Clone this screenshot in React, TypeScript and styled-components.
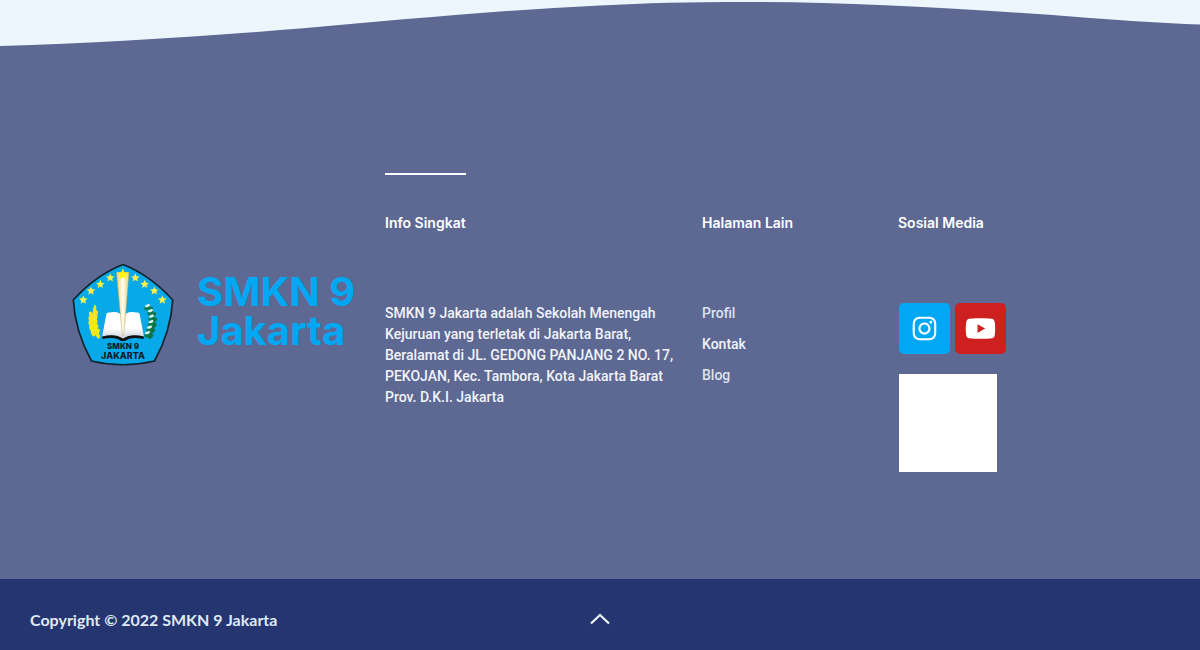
import React from "react";
import styled, { createGlobalStyle } from "styled-components";
import { FaInstagram, FaYoutube } from "react-icons/fa";

const GlobalStyle = createGlobalStyle`
  *, *::before, *::after { box-sizing: border-box; }
  body {
    margin: 0;
    background: #5d6893;
    font-family: Roboto, "Liberation Sans", sans-serif;
  }
`;

const Footer = styled.footer`
  display: flex;
  flex-direction: column;
  min-height: 100vh;
  background: #5d6893;
`;

const Wave = styled.svg`
  display: block;
  width: 100%;
  height: 50px;
`;

const Content = styled.div`
  flex: 1;
  display: grid;
  grid-template-columns: 313fr 317fr 196fr 302fr;
  padding-left: 6%;
`;

const Brand = styled.a`
  display: flex;
  align-items: center;
  gap: 23px;
  color: #00a8f3;
  text-decoration: none;
`;

const Emblem = styled.svg`
  flex: none;
  width: 102px;
  height: 104px;
`;

const BrandName = styled.span`
  padding-bottom: 8px;
  font-family: Inter, sans-serif;
  font-size: 40px;
  font-weight: 700;
  line-height: 39px;
`;

const BrandLine = styled.span`
  display: block;
`;

const Column = styled.section`
  padding-top: 123px;
  padding-bottom: 106px;
`;

const Lead = styled.div`
  height: 40px;
`;

const Rule = styled.hr`
  width: 81px;
  height: 2px;
  margin: 0;
  border: 0;
  background: #fff;
`;

const Heading = styled.h2`
  margin: 0 0 70px;
  color: #fff;
  font-family: Inter, sans-serif;
  font-size: 14px;
  font-weight: 600;
  line-height: 20px;
`;

const About = styled.p`
  margin: 0;
  color: #f1f4fa;
  font-size: 14px;
  font-weight: 500;
  line-height: 21px;
  white-space: nowrap;
`;

const Links = styled.ul`
  display: grid;
  gap: 10px;
  margin: 0;
  padding: 0;
  list-style: none;
`;

const PageLink = styled.a<{ $active?: boolean }>`
  display: block;
  color: ${(p) => (p.$active ? "#edf5fd" : "#dbe4f2")};
  font-size: 14px;
  font-weight: 500;
  line-height: 21px;
  text-decoration: none;
`;

const SocialRow = styled.div`
  display: flex;
  gap: 5px;
  padding-left: 1px;
`;

const SocialLink = styled.a<{ $color: string }>`
  display: grid;
  place-items: center;
  width: 51px;
  height: 51px;
  border-radius: 5px;
  background: ${(p) => p.$color};
  color: #fff;
`;

const InstagramIcon = styled(FaInstagram)`
  width: 27px;
  height: 27px;
`;

const YoutubeIcon = styled(FaYoutube)`
  width: 31px;
  height: 29px;
`;

const Panel = styled.div`
  width: 98px;
  height: 98px;
  margin: 20px 0 0 1px;
  background: #fff;
`;

const Bar = styled.div`
  display: grid;
  grid-template-columns: 1fr auto 1fr;
  align-items: center;
  padding: 30px 30px 19px;
  background: #253570;
`;

const Copyright = styled.p`
  margin: 0;
  color: #dfe9f6;
  font-family: Lato, sans-serif;
  font-size: 16px;
  font-weight: 700;
  line-height: 22px;
`;

const TopButton = styled.button`
  display: grid;
  place-items: center;
  width: 22px;
  height: 22px;
  padding: 0;
  border: 0;
  background: none;
  color: #edf5fd;
  cursor: pointer;
`;

const STARS: [number, number][] = [
  [11.3, 37], [19, 28], [28.3, 21.3], [38.3, 14.8],
  [63.3, 14.8], [72.7, 21.3], [82.3, 27.8], [90.3, 37],
];

const starPoints = (cx: number, cy: number, r: number) =>
  Array.from({ length: 10 }, (_, i) => {
    const radius = i % 2 ? r * 0.45 : r;
    const angle = (Math.PI / 5) * i - Math.PI / 2;
    return `${(cx + radius * Math.cos(angle)).toFixed(2)},${(cy + radius * Math.sin(angle)).toFixed(2)}`;
  }).join(" ");

/* x, y of each pair of grains, from the stalk's foot to its tip */
const GRAIN: [number, number][] = [
  [23, 70], [21.5, 65.5], [20.7, 61], [20.7, 56.5], [21.2, 52],
];

/* x, y of each leaf cluster, from top to bottom */
const LEAVES: [number, number][] = [
  [77, 45], [80, 50], [81, 55.5], [80.5, 61], [79, 66.5], [77, 72],
];

function SchoolEmblem() {
  return (
    <Emblem viewBox="0 0 102 104" aria-hidden="true">
      <defs>
        <linearGradient id="page" x1="0" y1="0" x2="0" y2="1">
          <stop offset="0.6" stopColor="#fff" />
          <stop offset="1" stopColor="#c9ced3" />
        </linearGradient>
        <linearGradient id="flame" x1="0" x2="1">
          <stop offset="0" stopColor="#ecd27c" />
          <stop offset="0.5" stopColor="#fffdf0" />
          <stop offset="1" stopColor="#ecd27c" />
        </linearGradient>
      </defs>
      <path
        d="M51 1.5Q24 12 1.3 37Q3 68 19.5 98Q51 105.5 82.5 98Q99 68 100.7 37Q78 12 51 1.5Z"
        fill="#08a9e9"
        stroke="#10222c"
        strokeWidth="1.7"
        strokeLinejoin="round"
      />
      <path d="M51 54Q48 49 42 49Q36 49 34.5 50.5L30 74Q43 70 51 76Q59 70 72 74L67.5 50.5Q66 49 60 49Q54 49 51 54Z" fill="url(#page)" />
      <path d="M30 73.5Q43 70 51 75.5Q59 70 72 73.5L71.5 76Q59 73 53 78L49 78Q43 73 30.5 76Z" fill="#111" />
      <path d="M44.5 9.5L57 9.5L53 58L51.5 73L50.5 73L49 58Z" fill="url(#flame)" stroke="#b8a866" strokeWidth="0.5" />
      <polygon points={starPoints(50.8, 11.5, 6.2)} fill="#fff30f" />
      {STARS.map(([x, y]) => (
        <polygon key={x} points={starPoints(x, y, 4.5)} fill="#fff04a" />
      ))}
      <path d="M26 75.5Q17.5 64 22 44L23.5 42L24 48Q22 62 28 74Z" fill="#f4e51a" stroke="#f4e51a" />
      {GRAIN.map(([x, y]) => (
        <g key={y} fill="#f8e71c">
          <ellipse cx={x - 2} cy={y} rx="1.9" ry="3.6" transform={`rotate(-22 ${x - 2} ${y})`} />
          <ellipse cx={x + 2.5} cy={y - 1} rx="1.9" ry="3.6" transform={`rotate(24 ${x + 2.5} ${y - 1})`} />
        </g>
      ))}
      <path d="M76 75Q87 61 77 43" fill="none" stroke="#126b43" strokeWidth="2" />
      {LEAVES.map(([x, y]) => (
        <g key={y}>
          <ellipse cx={x - 1.5} cy={y} rx="3.4" ry="2" fill="#0c7c47" transform={`rotate(-28 ${x - 1.5} ${y})`} />
          <ellipse cx={x + 2} cy={y + 1.5} rx="2.8" ry="1.7" fill="#137244" transform={`rotate(-50 ${x + 2} ${y + 1.5})`} />
          <ellipse cx={x - 1.5} cy={y - 2.3} rx="2.6" ry="1.3" fill="#e5f6ed" transform={`rotate(-20 ${x - 1.5} ${y - 2.3})`} />
        </g>
      ))}
      <text x="51" y="86" textAnchor="middle" fontFamily="Inter, sans-serif" fontWeight="800" fontSize="8" fill="#0d1b24">
        SMKN 9
      </text>
      <text x="51" y="96" textAnchor="middle" fontFamily="Inter, sans-serif" fontWeight="800" fontSize="9" fill="#0d1b24">
        JAKARTA
      </text>
    </Emblem>
  );
}

export default function App() {
  return (
    <>
      <GlobalStyle />
      <Footer>
        <Wave viewBox="0 0 1200 50" preserveAspectRatio="none" aria-hidden="true">
          <path
            d="M0 0H1200V24.5C1160 23 1130 21 1090 18C960 8 850 2 744 2C690 2 645 3 600 5.5C500 10 400 20 306 28C210 36 100 43 0 46Z"
            fill="#edf6fd"
          />
        </Wave>
        <Content>
          <Brand href="#">
            <SchoolEmblem />
            <BrandName>
              <BrandLine>SMKN 9</BrandLine>
              <BrandLine>Jakarta</BrandLine>
            </BrandName>
          </Brand>
          <Column>
            <Lead>
              <Rule />
            </Lead>
            <Heading>Info Singkat</Heading>
            <About>
              SMKN 9 Jakarta adalah Sekolah Menengah
              <br />
              Kejuruan yang terletak di Jakarta Barat,
              <br />
              Beralamat di JL. GEDONG PANJANG 2 NO. 17,
              <br />
              PEKOJAN, Kec. Tambora, Kota Jakarta Barat
              <br />
              Prov. D.K.I. Jakarta
            </About>
          </Column>
          <Column>
            <Lead />
            <Heading>Halaman Lain</Heading>
            <Links>
              <li><PageLink href="#profil">Profil</PageLink></li>
              <li><PageLink href="#kontak" $active>Kontak</PageLink></li>
              <li><PageLink href="#blog">Blog</PageLink></li>
            </Links>
          </Column>
          <Column>
            <Lead />
            <Heading>Sosial Media</Heading>
            <SocialRow>
              <SocialLink href="#instagram" aria-label="Instagram" $color="#00a8f3">
                <InstagramIcon />
              </SocialLink>
              <SocialLink href="#youtube" aria-label="YouTube" $color="#cd201f">
                <YoutubeIcon />
              </SocialLink>
            </SocialRow>
            <Panel />
          </Column>
        </Content>
        <Bar>
          <Copyright>Copyright © 2022 SMKN 9 Jakarta</Copyright>
          <TopButton type="button" aria-label="Top">
            <svg width="22" height="22" viewBox="0 0 22 22" aria-hidden="true">
              <path d="M2 14.5L11 6L20 14.5" fill="none" stroke="currentColor" strokeWidth="2.2" />
            </svg>
          </TopButton>
        </Bar>
      </Footer>
    </>
  );
}
